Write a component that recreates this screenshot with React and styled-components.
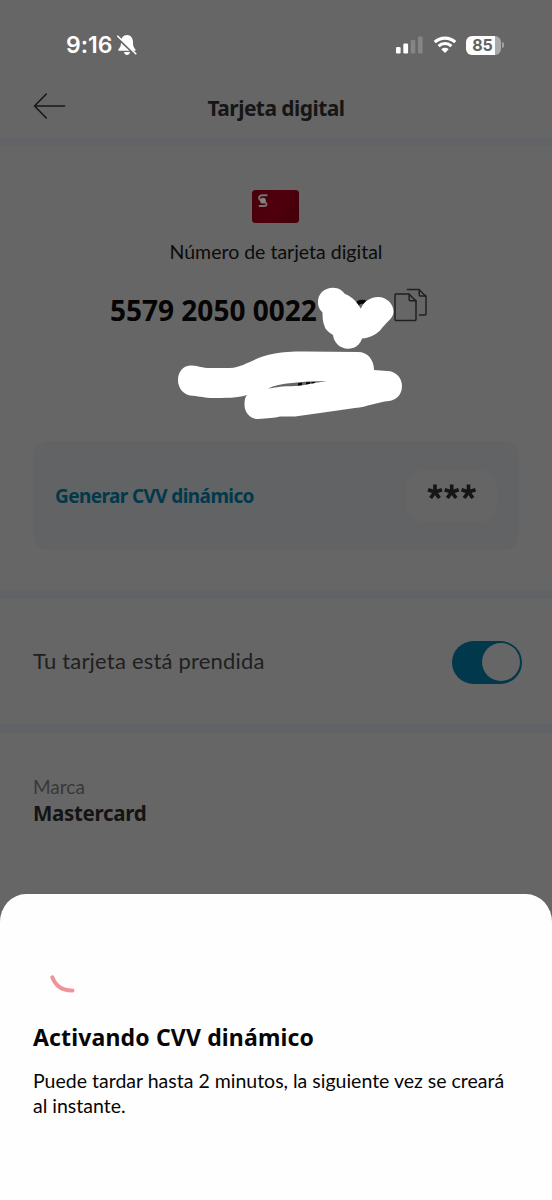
import styled, { createGlobalStyle } from "styled-components";

const GlobalStyle = createGlobalStyle`
* {
  box-sizing: border-box;
}
body {
  margin: 0;
  background-color: #666666;
  font-family: Lato, "Noto Sans", sans-serif;
  font-variant-ligatures: none;
}
`;

const Screen = styled.div`
display: flex;
flex-direction: column;
width: 552px;
height: 1200px;
overflow: hidden;
background-color: #666666;
`;

const StatusBar = styled.div`
display: flex;
align-items: center;
height: 90px;
padding: 0 51px 0 66px;
color: white;
font-family: Inter, sans-serif;
`;

const Clock = styled.span`
font-size: 23px;
font-weight: 600;
letter-spacing: 0;
width: 51px;
white-space: nowrap;
`;

const StatusIcons = styled.div`
display: flex;
align-items: center;
margin-left: auto;
`;

const Battery = styled.div`
display: flex;
align-items: center;
justify-content: center;
position: relative;
width: 35px;
height: 19px;
margin-left: 9px;
padding-right: 2px;
border-radius: 6px;
background: linear-gradient(to right, #fefefe 29px, #a9a9a9 29px);
color: #626262;
font-size: 16px;
font-weight: 700;
&::after {
  content: "";
  position: absolute;
  right: -3px;
  top: 6px;
  width: 2px;
  height: 6px;
  border-radius: 0 2px 2px 0;
  background-color: #a0a0a0;
}
`;

const Header = styled.header`
display: grid;
grid-template-columns: 66px 1fr 66px;
height: 48px;
padding: 0 0 12px;
align-items: center;
`;

const Back = styled.button`
display: flex;
border: none;
background: none;
padding: 0 0 4px 33px;
`;

const Title = styled.h1`
margin: 0;
color: #161616;
font-family: "Noto Sans", sans-serif;
font-size: 21px;
line-height: 36px;
font-weight: 700;
letter-spacing: ${(props) => props.$spacing};
text-align: center;
white-space: nowrap;
`;

const Divider = styled.div`
flex: none;
height: ${(props) => props.$height || "9px"};
background-color: #626367;
`;

const CardSection = styled.section`
display: flex;
flex-direction: column;
align-items: center;
height: 444px;
padding: 44px 33px 0;
`;

const CardLabel = styled.p`
margin: 13px 0 0;
color: #0b0b0b;
font-size: 19.5px;
line-height: 32px;
font-weight: 400;
letter-spacing: ${(props) => props.$spacing};
white-space: nowrap;
`;

const NumberRow = styled.div`
display: flex;
position: relative;
align-self: stretch;
height: 48px;
margin-top: 18px;
padding-left: 77px;
`;

const CardNumber = styled.span`
width: 284px;
color: #050505;
font-family: "Noto Sans", sans-serif;
font-size: 28px;
line-height: 48px;
font-weight: 700;
letter-spacing: ${(props) => props.$spacing};
white-space: nowrap;
`;

const CopyButton = styled.button`
display: flex;
border: none;
background: none;
padding: 2px 0 0;
`;

const Scribble = styled.svg`
position: absolute;
left: 137px;
top: -6px;
`;

const CvvBox = styled.div`
display: flex;
align-items: center;
justify-content: space-between;
align-self: stretch;
height: 109px;
margin-top: 107px;
padding: 0 22px;
border-radius: 16px;
background-color: #616365;
`;

const CvvLink = styled.span`
color: #02394a;
font-family: "Noto Sans", sans-serif;
font-size: 19px;
font-weight: 700;
letter-spacing: ${(props) => props.$spacing};
white-space: nowrap;
`;

const CvvValue = styled.span`
display: flex;
align-items: center;
justify-content: center;
width: 91px;
height: 52px;
border-radius: 15px;
background-color: #666566;
`;

const ToggleRow = styled.section`
display: flex;
align-items: center;
justify-content: space-between;
height: 125px;
padding: 1px 30px 0 33px;
`;

const ToggleLabel = styled.span`
color: #202020;
font-size: 22px;
line-height: 26px;
padding-bottom: 2px;
letter-spacing: ${(props) => props.$spacing};
white-space: nowrap;
`;

const Toggle = styled.span`
display: flex;
justify-content: flex-end;
width: 70px;
height: 43px;
padding: 2.5px 2.5px 2.5px 0;
border-radius: 22px;
background-color: #02384b;
`;

const Knob = styled.span`
width: 38px;
height: 38px;
border-radius: 50%;
background-color: #666666;
`;

const BrandSection = styled.section`
height: 161px;
padding: 41px 33px 0;
`;

const BrandLabel = styled.div`
color: #383838;
font-size: 19px;
line-height: 26px;
letter-spacing: ${(props) => props.$spacing};
`;

const BrandName = styled.div`
color: #141414;
font-family: "Noto Sans", sans-serif;
font-size: 20.5px;
line-height: 27px;
font-weight: 700;
letter-spacing: ${(props) => props.$spacing};
`;

const Sheet = styled.section`
flex: 1;
padding: 76px 33px 0;
border-radius: 26px 26px 0 0 / 28px 28px 0 0;
background-color: #fefefe;
color: #060606;
`;

const Spinner = styled.svg`
display: block;
margin-left: 14px;
`;

const SheetTitle = styled.h2`
margin: 17px 0 0;
font-family: "Noto Sans", sans-serif;
font-size: 23px;
line-height: 40px;
font-weight: 700;
letter-spacing: ${(props) => props.$spacing};
white-space: nowrap;
`;

const SheetText = styled.p`
margin: 12px 0 0;
font-size: 19.5px;
line-height: 24.5px;
letter-spacing: ${(props) => props.$spacing};
white-space: nowrap;
`;

function BellOff() {
  return (
    <svg width="20" height="22" viewBox="0 0 20 22">
      <path d="M10 1C13.5 1 16 3.8 16 8c0 4 .6 5 2.300 7.200.6.8.3 1.600-.7 1.600H2.200c-1 0-1.300-.8-.7-1.600C3.300 13 4 12 4 8 4 3.800 6.500 1 10 1Z" fill="white" />
      <path d="M7 18h6c-.4 2-1.400 3-3 3s-2.600-1-3-3Z" fill="white" />
      <path d="M0 3.200 19 21.200" stroke="#666666" strokeWidth="2.600" />
      <path d="M.8 2.200 18.800 19.800" stroke="white" strokeWidth="1.600" strokeLinecap="round" />
    </svg>
  );
}

function Signal() {
  return (
    <svg width="28" height="18" viewBox="0 0 28 18">
      <rect x="0" y="11" width="4.600" height="6.500" rx="1.200" fill="white" />
      <rect x="7.300" y="7.500" width="4.800" height="10" rx="1.200" fill="white" />
      <rect x="14.700" y="4" width="4.600" height="13.500" rx="1.200" fill="#858585" />
      <rect x="22" y="0.500" width="4.600" height="17" rx="1.200" fill="#858585" />
    </svg>
  );
}

const WifiSvg = styled.svg`
margin-left: 9px;
`;

function Wifi() {
  return (
    <WifiSvg width="24" height="18" viewBox="0 0 24 18">
      <path d="M1.800 6.200a14.600 14.600 0 0 1 20.400 0" fill="none" stroke="white" strokeWidth="3.200" />
      <path d="M5.600 10.200a9.200 9.200 0 0 1 12.800 0" fill="none" stroke="white" strokeWidth="3" />
      <path d="M8.300 13.200a5.400 5.400 0 0 1 7.400 0L12 17Z" fill="white" />
    </WifiSvg>
  );
}

function CardImage() {
  return (
    <svg width="48" height="33" viewBox="0 0 48 33">
      <defs>
        <linearGradient id="cardRed" x1="0" y1="0" x2="1" y2="0.500">
          <stop offset="0" stopColor="#46000a" />
          <stop offset="0.600" stopColor="#50000c" />
          <stop offset="1" stopColor="#46000a" />
        </linearGradient>
      </defs>
      <rect width="47" height="33" rx="3.500" fill="url(#cardRed)" />
      <path d="M15.500 5.300H10.500C8 5.300 7 6.800 7 8.300c0 2.800 7.600 3.200 7.600 5.700 0 1.200-1 2-2.600 2H6.800" fill="none" stroke="#777174" strokeWidth="1.900" />
      <circle cx="11" cy="10.700" r="2.900" fill="#858083" />
    </svg>
  );
}

function CopyIcon() {
  return (
    <svg width="34" height="36" viewBox="0 0 34 36" fill="none" stroke="#202020" strokeWidth="1.500" strokeLinejoin="round" strokeLinecap="round">
      <path d="M2 6H15L22 13v18.500a1 1 0 0 1-1 1H2a1 1 0 0 1-1-1V7a1 1 0 0 1 1-1Z" />
      <path d="M15.200 6.200v5.500a1 1 0 0 0 1 1H22" />
      <path d="M13.500 1.500H25l7 7V26a1 1 0 0 1-1 1h-5.500" />
      <path d="M25.200 1.700v5.300a1 1 0 0 0 1 1H32" />
    </svg>
  );
}

// coordinates start at (170, 280) of the screen
function Redaction() {
  return (
    <Scribble width="240" height="145" viewBox="170 280 240 145">
      <path d="M357 305C358 300.500 366 300.500 368 305" fill="none" stroke="#080808" strokeWidth="4" />
      <path d="M318 303C317.500 294 324 287.700 333 287.700C339 288 342 290 345 294C352 296.500 357 302 360.800 308.700C364 301 371 297 378 297C387 297 393.500 304 393.500 312C393.500 317 389 320 382 328C378 334 370 338 362 338.500C360 345 355 348.700 348 348.700C340 348.500 334 343 333 335C328 332 325 329 324.500 326C322.500 321 322.500 317 322.500 312.500C319 309 318 306 318 303Z" fill="#fff" />
      <path d="M178 380C178 371 184 365 192 365.500C199 366 201 368 211 368H230C245 367 254 357 275 353.500C288 351.500 296 351.500 305 351.500L358 352C368 352 374 360 374 370L387 371C396 371 402 378 402 386C402 395 396 400 389 401C377 402 367 407 355 408L320 413L295 416.500H280C274 418 268 418 258 419C250 419 244.500 412 244.500 405C244.500 400 245 397 247 395C238 398 226 398 210 398C203 397.500 198 396 190 395.500C183 394 178 388 178 380Z" fill="#fff" />
      <path d="M268 388.500C280 383 300 381.500 327 381C310 383.500 302 386 291 386.300C281 386 274 388 268 388.500Z" fill="#666666" />
      <path d="M298 383.200 302 382.600V385L298 385.800ZM306 382.200 310 382V383.800L306 384.500ZM311.500 382H315V382.900L311.500 383.400Z" fill="#080808" />
    </Scribble>
  );
}

const StarsSvg = styled.svg`
margin-bottom: 7px;
`;

function Stars() {
  return (
    <StarsSvg width="49" height="16" viewBox="0 0 49 16">
      {[8, 24.700, 41.500].map((x) => (
        <path
          key={x}
          d="M0 0V-7.500M0 0 7-2.300M0 0 4.400 6M0 0-4.400 6M0 0-7-2.300"
          transform={`translate(${x} 8)`}
          stroke="#161616"
          strokeWidth="3.700"
        />
      ))}
    </StarsSvg>
  );
}

export default function App() {
  return (
    <Screen>
      <GlobalStyle />
      <StatusBar>
        <Clock>9:16</Clock>
        <BellOff />
        <StatusIcons>
          <Signal />
          <Wifi />
          <Battery>85</Battery>
        </StatusIcons>
      </StatusBar>
      <Header>
        <Back aria-label="Volver">
          <svg width="33" height="26" viewBox="0 0 33 26" fill="none" stroke="#181818" strokeWidth="1.600" strokeLinecap="round" strokeLinejoin="round">
            <path d="M31.500 13H1.500M13.300 1 1.500 13l11.800 12" />
          </svg>
        </Back>
        <Title $spacing="-0.55px">Tarjeta digital</Title>
      </Header>
      <Divider $height="8px" />
      <CardSection>
        <CardImage />
        <CardLabel $spacing="0px">Número de tarjeta digital</CardLabel>
        <NumberRow>
          <CardNumber $spacing="0px">5579 2050 0022</CardNumber>
          <CopyButton aria-label="Copiar">
            <CopyIcon />
          </CopyButton>
          <Redaction />
        </NumberRow>
        <CvvBox>
          <CvvLink $spacing="-0.6px">Generar CVV dinámico</CvvLink>
          <CvvValue aria-label="***">
            <Stars />
          </CvvValue>
        </CvvBox>
      </CardSection>
      <Divider />
      <ToggleRow>
        <ToggleLabel $spacing="0.2px">Tu tarjeta está prendida</ToggleLabel>
        <Toggle>
          <Knob />
        </Toggle>
      </ToggleRow>
      <Divider />
      <BrandSection>
        <BrandLabel $spacing="0px">Marca</BrandLabel>
        <BrandName $spacing="-0.3px">Mastercard</BrandName>
      </BrandSection>
      <Sheet>
        <Spinner width="30" height="30" viewBox="47 970 30 30">
          <path d="M52.300 977.300C55.500 985.500 62.500 990.800 72.500 990.500" fill="none" stroke="#f0949b" strokeWidth="4" strokeLinecap="round" />
        </Spinner>
        <SheetTitle $spacing="0.15px">Activando CVV dinámico</SheetTitle>
        <SheetText $spacing="0px">
          Puede tardar hasta 2 minutos, la siguiente vez se creará
          <br />
          al instante.
        </SheetText>
      </Sheet>
    </Screen>
  );
}
